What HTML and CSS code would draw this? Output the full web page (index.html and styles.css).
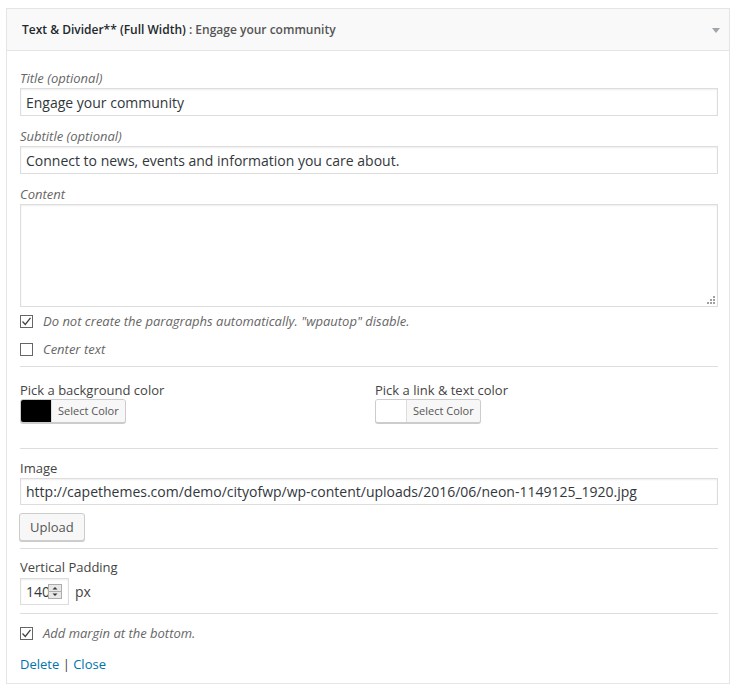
FILE: index.html
```html
<!DOCTYPE html>
<html>
<head>
<meta charset="utf-8">
<link rel="stylesheet" href="styles.css">
</head>
<body>
<div class="widget">
  <div class="widget-top">
    <h3>Text &amp; Divider** (Full Width)<span class="in-title"> : Engage your community</span></h3>
    <span class="arrow"></span>
  </div>
  <div class="widget-inside">
    <div class="field">
      <label class="lbl-i">Title (optional)</label>
      <input class="text" type="text" value="Engage your community">
    </div>
    <div class="field">
      <label class="lbl-i">Subtitle (optional)</label>
      <input class="text" type="text" value="Connect to news, events and information you care about.">
    </div>
    <div class="field-last">
      <label class="lbl-i">Content</label>
      <div class="ta-wrap">
        <textarea class="ta"></textarea>
        <svg class="grip" width="8" height="8" viewBox="0 0 8 8"><g fill="#a0a0a0"><rect x="6" y="0" width="2" height="2"/><rect x="3" y="3" width="2" height="2"/><rect x="6" y="3" width="2" height="2"/><rect x="0" y="6" width="2" height="2"/><rect x="3" y="6" width="2" height="2"/><rect x="6" y="6" width="2" height="2"/></g></svg>
      </div>
    </div>
    <div class="check-row">
      <span class="cb"><svg width="11" height="11" viewBox="0 0 11 11"><path d="M1.5 5.5 L4.3 8.5 L9.5 1.8" fill="none" stroke="#444" stroke-width="1.3"/></svg></span>
      <span class="lbl-i">Do not create the paragraphs automatically. "wpautop" disable.</span>
    </div>
    <div class="check-row">
      <span class="cb"></span>
      <span class="lbl-i">Center text</span>
    </div>
    <hr class="sep sep-a">
    <div class="colors">
      <div class="color-col">
        <label class="lbl">Pick a background color</label>
        <span class="color-btn"><span class="swatch swatch-black"></span><span class="sel">Select Color</span></span>
      </div>
      <div class="color-col">
        <label class="lbl">Pick a link &amp; text color</label>
        <span class="color-btn"><span class="swatch swatch-white"></span><span class="sel">Select Color</span></span>
      </div>
    </div>
    <hr class="sep sep-b">
    <div class="field-img">
      <label class="lbl">Image</label>
      <input class="text text-img" type="text" value="http://capethemes.com/demo/cityofwp/wp-content/uploads/2016/06/neon-1149125_1920.jpg">
      <span class="button">Upload</span>
    </div>
    <hr class="sep sep-c">
    <div class="field-pad">
      <label class="lbl">Vertical Padding</label>
      <div class="pad-row">
        <span class="num"><span class="num-val">140</span><svg class="spin" width="14" height="15" viewBox="0 0 14 15"><rect x="0.5" y="0.5" width="13" height="14" fill="#e8e8e8" stroke="#adadad"/><line x1="0.5" y1="7.5" x2="13.5" y2="7.5" stroke="#adadad"/><path d="M4.5 5.5 L7 3 L9.5 5.5 Z" fill="#333"/><path d="M4.5 9.5 L7 12 L9.5 9.5 Z" fill="#333"/></svg></span>
        <span class="unit">px</span>
      </div>
    </div>
    <hr class="sep sep-d">
    <div class="check-row check-last">
      <span class="cb"><svg width="11" height="11" viewBox="0 0 11 11"><path d="M1.5 5.5 L4.3 8.5 L9.5 1.8" fill="none" stroke="#444" stroke-width="1.3"/></svg></span>
      <span class="lbl-i">Add margin at the bottom.</span>
    </div>
    <div class="actions"><a href="#">Delete</a> | <a href="#">Close</a></div>
  </div>
</div>
</body>
</html>
```

FILE: styles.css
```css
* { box-sizing: border-box; }
html, body { margin: 0; padding: 0; background: #fff; }
body {
  font-family: "Open Sans", "Noto Sans", sans-serif;
  font-size: 13px;
  color: #444;
}
.widget {
  margin: 8px 4px 0 6px;
  width: 724px;
  border: 1px solid #e5e5e5;
  background: #fff;
}
.widget-top {
  height: 42px;
  background: #f9f9f9;
  border-bottom: 1px solid #e5e5e5;
  display: flex;
  align-items: center;
  justify-content: space-between;
  padding: 1px 9px 0 15px;
}
.widget-top h3 {
  margin: 0;
  font-size: 12px;
  font-weight: 600;
  color: #23282d;
  line-height: 18px;
}
.in-title { color: #555; font-weight: 600; }
.arrow {
  width: 0; height: 0;
  border-left: 4px solid transparent;
  border-right: 4px solid transparent;
  border-top: 5px solid #a0a5aa;
}
.widget-inside {
  padding: 18px 11px 10px 13px;
}
.lbl-i {
  font-style: italic;
  color: #666;
  line-height: 18px;
}
.lbl { color: #444; line-height: 18px; display: block; }
label.lbl-i { display: block; }
.field { margin-bottom: 11px; }
.field label { margin-bottom: 1px; }
.text {
  display: block;
  width: 100%;
  height: 28px;
  border: 1px solid #ddd;
  box-shadow: inset 0 1px 2px rgba(0,0,0,.07);
  background: #fff;
  color: #32373c;
  font-family: "Open Sans", "Noto Sans", sans-serif;
  font-size: 14px;
  padding: 0 5px;
  margin: 0;
  outline: none;
}
.field-last label { margin-bottom: 1px; }
.ta-wrap { position: relative; }
.ta {
  display: block;
  width: 100%;
  height: 103px;
  border: 1px solid #ddd;
  box-shadow: inset 0 1px 2px rgba(0,0,0,.07);
  resize: none;
  margin: 0;
  outline: none;
}
.grip { position: absolute; right: 3px; bottom: 3px; }
.check-row {
  height: 28px;
  display: flex;
  align-items: center;
  gap: 10px;
}
.cb {
  width: 13px;
  height: 13px;
  border: 1px solid #666;
  background: #fff;
  display: flex;
  align-items: center;
  justify-content: center;
  flex: none;
}
.sep {
  border: 0;
  border-top: 1px solid #ddd;
  margin: 0;
  height: 0;
}
.sep-a { margin-top: 3px; }
.colors {
  display: grid;
  grid-template-columns: 355px 1fr;
  margin-top: 14px;
}
.color-btn {
  display: inline-flex;
  height: 24px;
  border: 1px solid #ccc;
  border-radius: 3px;
  background: #f7f7f7;
  box-shadow: 0 1px 0 #ccc;
  overflow: hidden;
  vertical-align: top;
}
.swatch { width: 30px; height: 100%; }
.swatch-black { background: #000; }
.swatch-white { background: #fff; }
.sel {
  border-left: 1px solid #ddd;
  font-size: 11px;
  color: #555;
  line-height: 22px;
  padding: 0 6px 0 6px;
  background: #f7f7f7;
}
.sep-b { margin-top: 25px; }
.field-img { margin-top: 10px; }
.field-img .lbl { margin-bottom: 1px; }
.text-img { height: 27px; }
.button {
  display: inline-block;
  margin-top: 8px;
  margin-left: -1px;
  height: 28px;
  line-height: 26px;
  padding: 0 10px;
  border: 1px solid #ccc;
  border-radius: 3px;
  background: #f7f7f7;
  box-shadow: 0 1px 0 #ccc;
  color: #555;
  font-size: 13px;
  vertical-align: top;
}
.sep-c { margin-top: 7px; }
.field-pad { margin-top: 9px; }
.field-pad .lbl { margin-bottom: 2px; }
.pad-row { display: flex; align-items: center; gap: 6px; }
.num {
  width: 49px;
  height: 27px;
  border: 1px solid #ddd;
  box-shadow: inset 0 1px 2px rgba(0,0,0,.07);
  display: flex;
  align-items: center;
  padding-left: 5px;
  overflow: hidden;
  font-size: 14px;
  color: #32373c;
}
.num-val { width: 22px; overflow: hidden; white-space: nowrap; flex: none; }
.spin { flex: none; }
.unit { font-size: 14px; color: #444; }
.sep-d { margin-top: 8px; }
.check-last { margin-top: 5px; }
.actions { margin-top: 8px; line-height: 18px; color: #444; }
.actions a { color: #0073aa; text-decoration: none; }
```
